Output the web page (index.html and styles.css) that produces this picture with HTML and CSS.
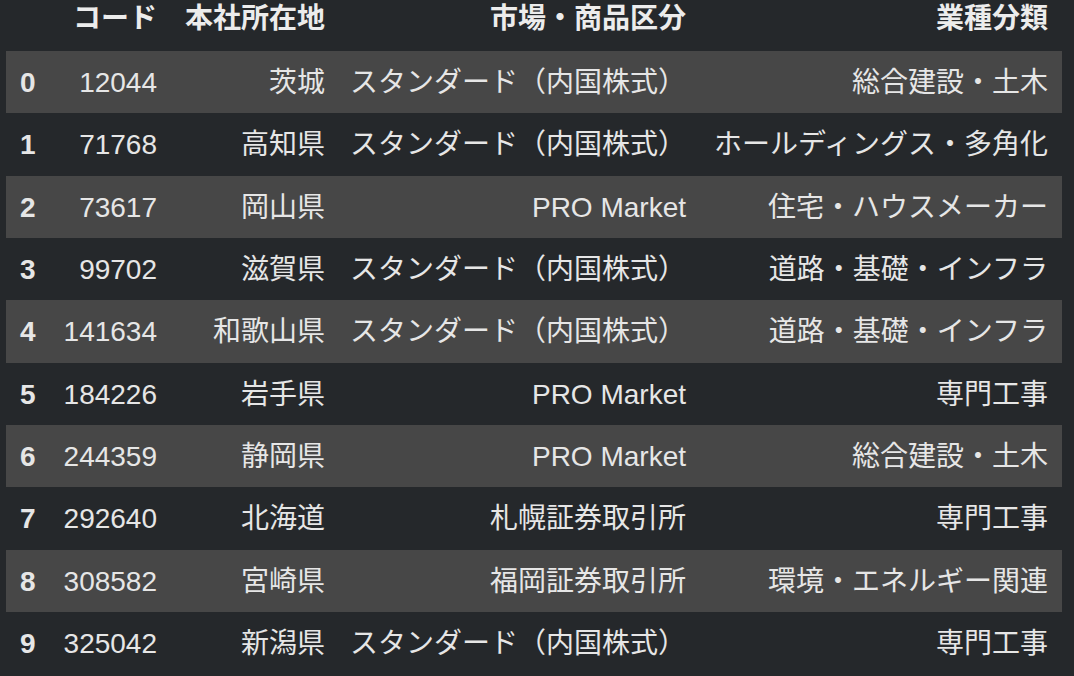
FILE: index.html
```html
<!DOCTYPE html>
<html lang="ja">
<head>
<meta charset="utf-8">
<link rel="stylesheet" href="styles.css">
</head>
<body>
<table class="df">
  <colgroup>
    <col class="c-idx"><col class="c-code"><col class="c-pref"><col class="c-mkt"><col class="c-ind">
  </colgroup>
  <thead>
    <tr><th></th><th>コード</th><th>本社所在地</th><th>市場・商品区分</th><th>業種分類</th></tr>
  </thead>
  <tbody>
    <tr><th>0</th><td>12044</td><td>茨城</td><td>スタンダード（内国株式）</td><td>総合建設・土木</td></tr>
    <tr><th>1</th><td>71768</td><td>高知県</td><td>スタンダード（内国株式）</td><td>ホールディングス・多角化</td></tr>
    <tr><th>2</th><td>73617</td><td>岡山県</td><td>PRO Market</td><td>住宅・ハウスメーカー</td></tr>
    <tr><th>3</th><td>99702</td><td>滋賀県</td><td>スタンダード（内国株式）</td><td>道路・基礎・インフラ</td></tr>
    <tr><th>4</th><td>141634</td><td>和歌山県</td><td>スタンダード（内国株式）</td><td>道路・基礎・インフラ</td></tr>
    <tr><th>5</th><td>184226</td><td>岩手県</td><td>PRO Market</td><td>専門工事</td></tr>
    <tr><th>6</th><td>244359</td><td>静岡県</td><td>PRO Market</td><td>総合建設・土木</td></tr>
    <tr><th>7</th><td>292640</td><td>北海道</td><td>札幌証券取引所</td><td>専門工事</td></tr>
    <tr><th>8</th><td>308582</td><td>宮崎県</td><td>福岡証券取引所</td><td>環境・エネルギー関連</td></tr>
    <tr><th>9</th><td>325042</td><td>新潟県</td><td>スタンダード（内国株式）</td><td>専門工事</td></tr>
  </tbody>
</table>
</body>
</html>
```
FILE: styles.css
```css
html, body {
  margin: 0;
  padding: 0;
  background: #25282b;
}
body {
  font-family: "Liberation Sans", "Noto Sans CJK JP", sans-serif;
  font-size: 28px;
  color: #e6e6e6;
  padding-left: 6px;
}
.df {
  border-collapse: collapse;
  border-spacing: 0;
  table-layout: fixed;
  width: 1056px;
}
.c-idx { width: 42px; }
.c-code { width: 123px; }
.c-pref { width: 168px; }
.c-mkt { width: 361px; }
.c-ind { width: 362px; }
.df th, .df td {
  padding: 0 14px 0 0;
  text-align: right;
  white-space: nowrap;
  line-height: 36px;
}
.df thead tr {
  height: 51px;
}
.df thead th {
  padding-top: 1px;
  vertical-align: top;
  font-weight: bold;
  color: #ececec;
}
.df tbody tr {
  height: 62.33px;
}
.df tbody th, .df tbody td {
  vertical-align: middle;
  padding-top: 2px;
}
.df tbody th {
  font-weight: bold;
  text-align: left;
  padding-left: 14px;
  padding-right: 0;
}
.df tbody tr:nth-child(odd) {
  background: #474747;
}
```
